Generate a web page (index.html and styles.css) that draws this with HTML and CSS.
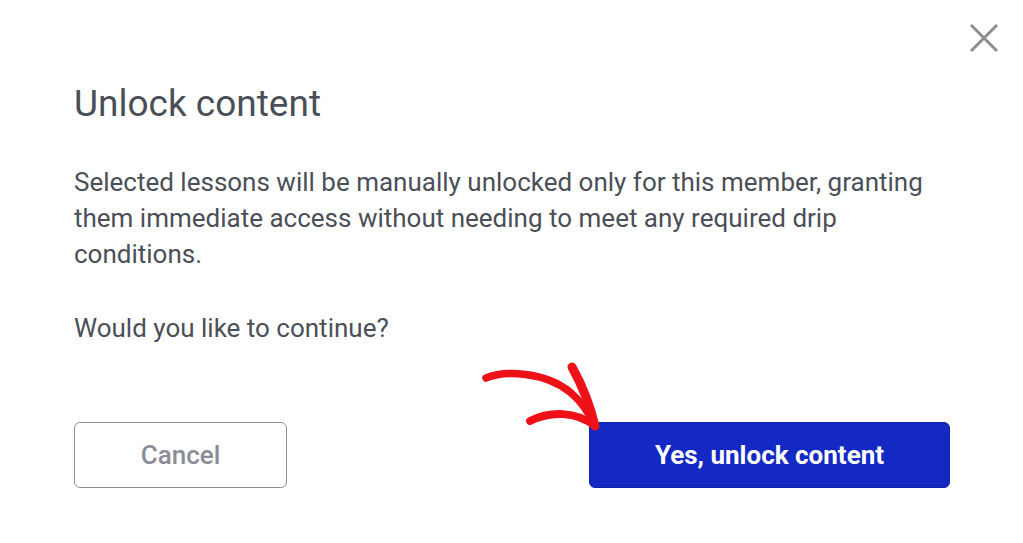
FILE: index.html
```html
<!DOCTYPE html>
<html>
<head>
<meta charset="utf-8">
<link rel="stylesheet" href="styles.css">
</head>
<body>
<div class="modal">
  <button class="close" aria-label="Close">
    <svg width="30" height="30" viewBox="0 0 30 30"><path d="M2 2 L28 28 M28 2 L2 28" stroke="#8d8d8d" stroke-width="3" fill="none"/></svg>
  </button>
  <h1 class="title">Unlock content</h1>
  <p class="text">Selected lessons will be manually unlocked only for this member, granting them immediate access without needing to meet any required drip conditions.</p>
  <p class="text">Would you like to continue?</p>
  <div class="actions">
    <button class="btn btn-cancel">Cancel</button>
    <button class="btn btn-primary">Yes, unlock content</button>
  </div>
  <svg class="arrow" width="130" height="80" viewBox="470 355 130 80">
    <path d="M486 378 C505 370 545 372 570 392 C583 403 590 415 595 426" stroke="#ee1218" stroke-width="7.5" stroke-linecap="round" fill="none"/>
    <path d="M572 367 C582 385 590 405 595 426" stroke="#ee1218" stroke-width="9" stroke-linecap="round" fill="none"/>
    <path d="M530 421 C550 411 576 411 595 426" stroke="#ee1218" stroke-width="8" stroke-linecap="round" fill="none"/>
  </svg>
</div>
</body>
</html>
```
FILE: styles.css
```css
html, body {
  margin: 0;
  padding: 0;
  background: #ffffff;
}
body {
  width: 1023px;
  height: 543px;
  overflow: hidden;
  font-family: Roboto, "Liberation Sans", sans-serif;
}
.modal {
  position: relative;
  box-sizing: border-box;
  width: 1023px;
  height: 543px;
  padding: 82px 73px 0 74px;
}
.close {
  position: absolute;
  top: 23px;
  right: 24px;
  width: 30px;
  height: 30px;
  padding: 0;
  border: 0;
  background: none;
}
.close svg { display: block; }
.title {
  margin: 0 0 38px;
  font-size: 37px;
  line-height: 44px;
  font-weight: 400;
  color: #4a4e57;
}
.text {
  margin: 0 0 38px;
  font-size: 26px;
  line-height: 36px;
  color: #4b4f58;
}
.actions {
  display: flex;
  justify-content: space-between;
  margin-top: 76px;
}
.btn {
  box-sizing: border-box;
  height: 66px;
  border-radius: 6px;
  font-family: Roboto, "Liberation Sans", sans-serif;
  font-size: 26px;
  font-weight: 500;
}
.btn-cancel {
  width: 213px;
  background: #ffffff;
  border: 1.5px solid #8e9097;
  color: #8a8d95;
}
.btn-primary {
  width: 361px;
  background: #1429c4;
  border: 1px solid #0f22a8;
  color: #ffffff;
  font-weight: 700;
}
.arrow {
  position: absolute;
  left: 470px;
  top: 355px;
  pointer-events: none;
}
```
